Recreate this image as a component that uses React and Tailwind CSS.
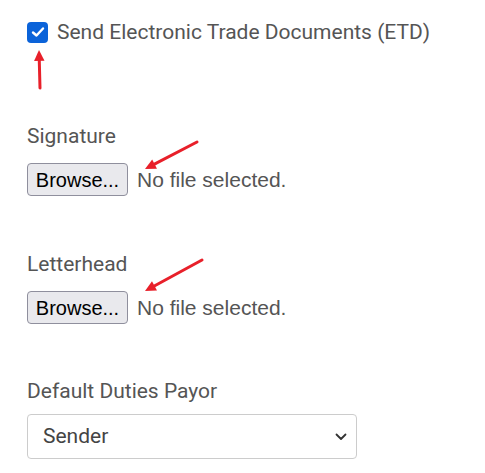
import React from 'react';

const FileField = ({ label, className }) => (
  <div className={className}>
    <div className="text-[21px] leading-[24px] text-[#555] font-['Roboto',sans-serif]">{label}</div>
    <div className="mt-[15px] flex items-center gap-[9px] font-['Liberation_Sans',Arial,sans-serif] text-[20px]">
      <button
        type="button"
        className="w-[101px] h-[33px] rounded-[4px] border border-[#8f8f9d] bg-[#e9e9ed] text-black leading-none"
      >
        Browse...
      </button>
      <span className="text-[21px] text-[#555]">No file selected.</span>
    </div>
  </div>
);

const Arrow = ({ x1, y1, x2, y2 }) => {
  const ang = Math.atan2(y2 - y1, x2 - x1);
  const len = 12;
  const spread = 0.45;
  const p1 = [x2 - len * Math.cos(ang - spread), y2 - len * Math.sin(ang - spread)];
  const p2 = [x2 - len * Math.cos(ang + spread), y2 - len * Math.sin(ang + spread)];
  const bx = x2 - 9 * Math.cos(ang);
  const by = y2 - 9 * Math.sin(ang);
  return (
    <g>
      <line x1={x1} y1={y1} x2={bx} y2={by} stroke="#e8202a" strokeWidth="3" strokeLinecap="round" />
      <polygon points={`${x2},${y2} ${p1[0]},${p1[1]} ${p2[0]},${p2[1]}`} fill="#e8202a" />
    </g>
  );
};

export default function App() {
  return (
    <div className="relative w-[485px] h-[473px] bg-white overflow-hidden">
      <div className="pl-[27px] pt-[21px]">
        <label className="flex items-center gap-[9px] font-['Roboto',sans-serif] text-[21px] text-[#555] leading-[22px]">
          <span className="w-[21px] h-[21px] rounded-[4px] bg-[#0b63d9] flex items-center justify-center shrink-0">
            <svg width="14" height="12" viewBox="0 0 14 12" fill="none">
              <path d="M2 6.5 L5.5 9.5 L12 2.5" stroke="white" strokeWidth="2.4" strokeLinecap="round" strokeLinejoin="round" />
            </svg>
          </span>
          Send Electronic Trade Documents (ETD)
        </label>

        <FileField label="Signature" className="mt-[81px]" />
        <FileField label="Letterhead" className="mt-[56px]" />

        <div className="mt-[55px]">
          <div className="text-[21px] leading-[24px] text-[#555] font-['Roboto',sans-serif]">Default Duties Payor</div>
          <div className="mt-[11px] w-[330px] h-[45px] rounded-[4px] border border-[#ccc] flex items-center justify-between pl-[15px] pr-[9px] font-['Roboto',sans-serif] text-[21px] text-[#444]">
            <span>Sender</span>
            <svg width="12" height="8" viewBox="0 0 12 8" fill="none">
              <path d="M1.5 1.5 L6 6 L10.5 1.5" stroke="#333" strokeWidth="1.8" strokeLinecap="round" strokeLinejoin="round" />
            </svg>
          </div>
        </div>
      </div>

      <svg className="absolute inset-0 pointer-events-none" width="485" height="473">
        <Arrow x1={40} y1={88} x2={39} y2={50} />
        <Arrow x1={197} y1={142} x2={145} y2={169} />
        <Arrow x1={202} y1={260} x2={145} y2={291} />
      </svg>
    </div>
  );
}
